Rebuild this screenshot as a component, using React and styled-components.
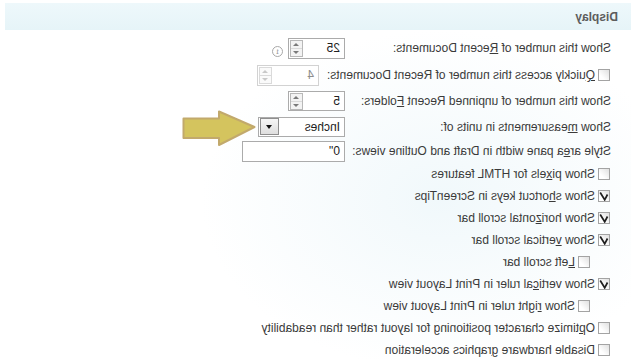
import React from "react";
import styled, { createGlobalStyle } from "styled-components";

const GlobalStyle = createGlobalStyle`
  html, body {
    margin: 0;
    padding: 0;
    background: #ffffff;
  }
`;

// the whole panel is shown mirrored, like the screenshot
const Page = styled.div`
  width: 631px;
  height: 360px;
  overflow: hidden;
  background: radial-gradient(ellipse 240px 170px at 190px 200px, rgba(214, 236, 244, 0.35), rgba(255, 255, 255, 0) 100%),
    #ffffff;
  transform: scaleX(-1);
  font-family: "Liberation Sans", Arial, sans-serif;
  font-size: 12px;
  color: #3a3a3a;
`;

const SectionBar = styled.div`
  margin: 3px 5px 0 0;
  height: 27px;
  display: flex;
  align-items: center;
  padding-left: 13px;
  background: linear-gradient(to bottom, #eef8fb, #e6f4f8);
  font-weight: bold;
  color: #5d5d5d;
`;

const Options = styled.div`
  padding: 4px 0 0 20px;
`;

const Row = styled.div`
  display: flex;
  align-items: center;
  height: ${(p) => p.$h || 22}px;
  padding-left: ${(p) => p.$indent || 0}px;
  white-space: nowrap;
`;

const Label = styled.span`
  flex-shrink: 0;
  width: ${(p) => (p.$w ? `${p.$w}px` : "auto")};
`;

const Box = styled.div`
  position: relative;
  box-sizing: border-box;
  display: flex;
  align-items: center;
  justify-content: space-between;
  width: ${(p) => p.$w}px;
  height: ${(p) => p.$h || 21}px;
  margin-left: ${(p) => p.$ml || 0}px;
  padding: 0 1px 0 4px;
  border: 1px solid ${(p) => (p.$disabled ? "#d2d2d2" : "#ababab")};
  background: #ffffff;
  color: ${(p) => (p.$disabled ? "#8c8c8c" : "#222222")};
`;

const Arrows = styled.div`
  display: flex;
  flex-direction: column;
  width: 13px;
  height: 17px;
  border: 1px solid ${(p) => (p.$disabled ? "#dadada" : "#b8b8b8")};
  box-sizing: border-box;
`;

const ArrowHalf = styled.div`
  flex: 1;
  display: flex;
  align-items: center;
  justify-content: center;
  background: ${(p) => (p.$disabled ? "#fafafa" : "#f3f3f3")};
  & + & {
    border-top: 1px solid ${(p) => (p.$disabled ? "#dadada" : "#c4c4c4")};
  }
`;

const Tri = styled.span`
  width: 0;
  height: 0;
  border-left: 3px solid transparent;
  border-right: 3px solid transparent;
  ${(p) =>
    p.$down
      ? `border-top: 3px solid ${p.$disabled ? "#c8c8c8" : "#7a7a7a"};`
      : `border-bottom: 3px solid ${p.$disabled ? "#c8c8c8" : "#7a7a7a"};`}
`;

const InfoIcon = styled.span`
  box-sizing: border-box;
  width: 11px;
  height: 11px;
  margin: 6px 0 0 5px;
  border: 1px solid #a8a8a8;
  border-radius: 50%;
  color: #9a9a9a;
  font-size: 8px;
  line-height: 9px;
  text-align: center;
  font-family: "DejaVu Serif", serif;
`;

const DropButton = styled.div`
  box-sizing: border-box;
  width: 19px;
  height: 17px;
  display: flex;
  align-items: center;
  justify-content: center;
  border: 1px solid #8e8e8e;
  background: linear-gradient(to bottom, #f6f6f6, #dedede);
`;

const DropTri = styled.span`
  width: 0;
  height: 0;
  border-left: 3px solid transparent;
  border-right: 3px solid transparent;
  border-top: 4px solid #111111;
`;

const Pointer = styled.svg`
  position: absolute;
  left: calc(100% + 3px);
  top: -8px;
`;

const Check = styled.span`
  box-sizing: border-box;
  flex-shrink: 0;
  width: 12px;
  height: 12px;
  margin: 0 3px 0 1px;
  display: flex;
  align-items: center;
  justify-content: center;
  border: 1px solid #a3a3a3;
  background: linear-gradient(135deg, #e0e0e0, #ffffff 70%);
`;

const Spinner = ({ value, w, h, disabled, ml }) => (
  <Box $w={w} $h={h} $disabled={disabled} $ml={ml}>
    <span>{value}</span>
    <Arrows $disabled={disabled}>
      <ArrowHalf $disabled={disabled}>
        <Tri $disabled={disabled} />
      </ArrowHalf>
      <ArrowHalf $disabled={disabled}>
        <Tri $down $disabled={disabled} />
      </ArrowHalf>
    </Arrows>
  </Box>
);

const CheckBox = ({ checked }) => (
  <Check>
    {checked && (
      <svg width="10" height="10" viewBox="0 0 10 10">
        <path d="M1.5 3.5 L4.3 8.8 L8.8 1.5" fill="none" stroke="#1e1e1e" strokeWidth="1.7" />
      </svg>
    )}
  </Check>
);

const checks = [
  { label: <>Show pi<u>x</u>els for HTML features</>, checked: false },
  { label: <>Show s<u>h</u>ortcut keys in ScreenTips</>, checked: true },
  { label: <>Show hori<u>z</u>ontal scroll bar</>, checked: true },
  { label: <>Show <u>v</u>ertical scroll bar</>, checked: true },
  { label: <><u>L</u>eft scroll bar</>, checked: false, indent: 20 },
  { label: <>Show verti<u>c</u>al ruler in Print Layout view</>, checked: true },
  { label: <>Show <u>r</u>ight ruler in Print Layout view</>, checked: false, indent: 20 },
  { label: <>O<u>p</u>timize character positioning for layout rather than readability</>, checked: false },
  { label: <>Disable hardware <u>g</u>raphics acceleration</>, checked: false },
];

const App = () => {
  return (
    <>
      <GlobalStyle />
      <Page>
        <SectionBar>Display</SectionBar>
        <Options>
          <Row $h={28}>
            <Label $w={266}>
              Show this number of <u>R</u>ecent Documents:
            </Label>
            <Spinner value="25" w={57} />
            <InfoIcon>i</InfoIcon>
          </Row>
          <Row $h={26}>
            <CheckBox />
            <Label>
              <u>Q</u>uickly access this number of Recent Documents:
            </Label>
            <Spinner value="4" w={62} disabled ml={8} />
          </Row>
          <Row $h={26}>
            <Label $w={266}>
              Show this number of unpinned Recent <u>F</u>olders:
            </Label>
            <Spinner value="5" w={57} h={20} />
          </Row>
          <Row $h={25}>
            <Label $w={266}>
              Show <u>m</u>easurements in units of:
            </Label>
            <Box $w={87} $h={20}>
              <span>Inches</span>
              <DropButton>
                <DropTri />
              </DropButton>
              <Pointer width="74" height="37" viewBox="0 0 74 37">
                <polygon
                  points="1.5,17 37,1.5 37,8.5 72.5,8.5 72.5,28 37,28 37,35"
                  fill="#d4c45e"
                  stroke="#c2a96c"
                  strokeWidth="2"
                  strokeLinejoin="round"
                />
              </Pointer>
            </Box>
          </Row>
          <Row $h={24}>
            <Label $w={266}>
              Style ar<u>e</u>a pane width in Draft and Outline views:
            </Label>
            <Box $w={103}>
              <span>0"</span>
            </Box>
          </Row>
          {checks.map((c, i) => (
            <Row key={i} $indent={c.indent}>
              <CheckBox checked={c.checked} />
              <Label>{c.label}</Label>
            </Row>
          ))}
        </Options>
      </Page>
    </>
  );
};

export default App;
